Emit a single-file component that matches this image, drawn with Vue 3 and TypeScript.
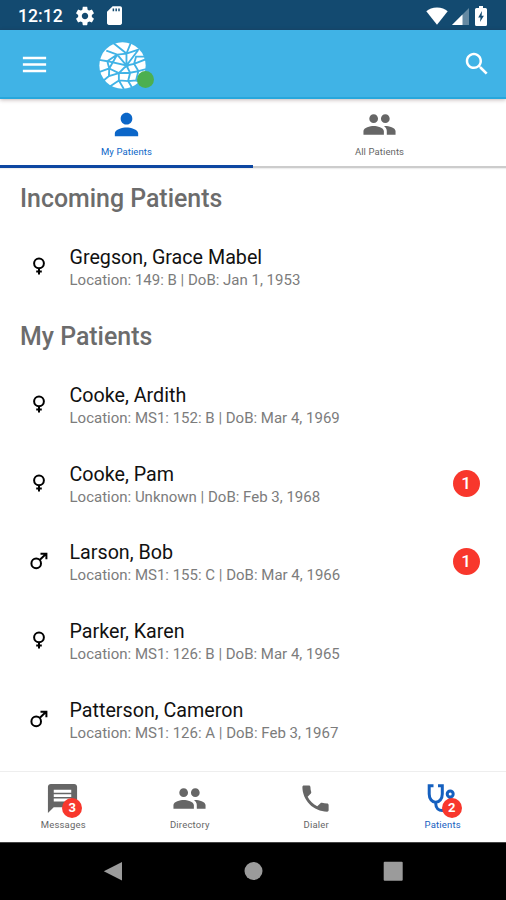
<script setup lang="ts">
type Gender = 'female' | 'male'

interface Patient {
  name: string
  location: string
  dob: string
  gender: Gender
  alerts?: number
}

interface Section {
  title: string
  patients: Patient[]
}

interface NavItem {
  label: string
  icon: string
  badge?: number
  active?: boolean
}

const PEOPLE =
  'M16 11c1.66 0 2.99-1.34 2.99-3S17.66 5 16 5s-3 1.34-3 3 1.34 3 3 3zm-8 0c1.66 0 2.99-1.34 2.99-3S9.66 5 8 5 5 6.34 5 8s1.34 3 3 3zm0 2c-2.33 0-7 1.17-7 3.5V19h14v-2.500c0-2.330-4.670-3.500-7-3.500zm8 0c-.29 0-.62.02-.97.05 1.160.840 1.970 1.970 1.970 3.450V19h6v-2.500c0-2.330-4.670-3.500-7-3.500z'

const sections: Section[] = [
  {
    title: 'Incoming Patients',
    patients: [{ name: 'Gregson, Grace Mabel', location: '149: B', dob: 'Jan 1, 1953', gender: 'female' }],
  },
  {
    title: 'My Patients',
    patients: [
      { name: 'Cooke, Ardith', location: 'MS1: 152: B', dob: 'Mar 4, 1969', gender: 'female' },
      { name: 'Cooke, Pam', location: 'Unknown', dob: 'Feb 3, 1968', gender: 'female', alerts: 1 },
      { name: 'Larson, Bob', location: 'MS1: 155: C', dob: 'Mar 4, 1966', gender: 'male', alerts: 1 },
      { name: 'Parker, Karen', location: 'MS1: 126: B', dob: 'Mar 4, 1965', gender: 'female' },
      { name: 'Patterson, Cameron', location: 'MS1: 126: A', dob: 'Feb 3, 1967', gender: 'male' },
    ],
  },
]

const navItems: NavItem[] = [
  {
    label: 'Messages',
    icon: 'M20 2H4c-1.100 0-1.990.900-1.990 2L2 22l4-4h14c1.100 0 2-.900 2-2V4c0-1.100-.900-2-2-2zm-2 12H6v-2h12v2zm0-3H6V9h12v2zm0-3H6V6h12v2z',
    badge: 3,
  },
  { label: 'Directory', icon: PEOPLE },
  {
    label: 'Dialer',
    icon: 'M6.620 10.790c1.440 2.830 3.760 5.140 6.590 6.590l2.200-2.200c.270-.270.670-.360 1.020-.240 1.120.370 2.330.570 3.570.570.550 0 1 .450 1 1V20c0 .550-.450 1-1 1-9.390 0-17-7.610-17-17 0-.550.450-1 1-1h3.500c.550 0 1 .450 1 1 0 1.250.200 2.450.570 3.570.110.350.030.740-.250 1.020l-2.200 2.200z',
  },
  { label: 'Patients', icon: '', badge: 2, active: true },
]
</script>

<template>
  <div class="screen">
    <header class="status">
      <span class="clock">12:12</span>
      <svg class="gear" viewBox="0 0 24 24"><path d="M19.430 12.980c.040-.320.070-.640.070-.980s-.030-.660-.070-.980l2.110-1.650c.190-.150.240-.420.120-.640l-2-3.460c-.120-.220-.390-.300-.610-.220l-2.490 1c-.520-.400-1.080-.730-1.690-.980l-.380-2.650C14.460 2.180 14.250 2 14 2h-4c-.250 0-.460.180-.490.420l-.380 2.650c-.610.250-1.170.590-1.690.980l-2.490-1c-.230-.090-.490 0-.610.220l-2 3.460c-.130.220-.070.490.120.640l2.110 1.650c-.040.320-.070.650-.070.980s.030.660.070.980l-2.110 1.650c-.190.150-.240.420-.120.640l2 3.460c.120.220.390.300.610.220l2.490-1c.520.400 1.080.730 1.690.980l.380 2.650c.030.240.240.420.490.420h4c.250 0 .460-.180.490-.420l.380-2.650c.610-.250 1.170-.590 1.690-.980l2.490 1c.230.090.490 0 .610-.220l2-3.460c.120-.220.070-.490-.120-.640l-2.110-1.650zM12 15.500c-1.930 0-3.500-1.570-3.500-3.500s1.570-3.500 3.500-3.500 3.500 1.570 3.500 3.500-1.570 3.500-3.500 3.500z" /></svg>
      <svg class="sd" viewBox="0 0 16 20"><path d="M14 0H6L0 6v12c0 1.100.900 2 2 2h12c1.100 0 2-.900 2-2V2c0-1.100-.900-2-2-2z" /><path class="notch" d="M6 2.500h1.600v3H6zM9 2.500h1.600v3H9zM12 2.500h1.600v3H12z" /></svg>
      <span class="spacer" />
      <svg class="wifi" viewBox="0 0 22 18"><path d="M11 17.800.300 4.300C2.800 1.900 6.600.500 11 .500s8.200 1.400 10.700 3.800z" /></svg>
      <svg class="cell" viewBox="0 0 17 17"><path class="dim" d="M17 0v17H0z" /><path d="M10.500 6.500V17H0z" /></svg>
      <svg class="battery" viewBox="0 0 12 20"><path d="M4 0h4v2h2.500A1.500 1.500 0 0 1 12 3.500v15a1.500 1.500 0 0 1-1.500 1.500h-9A1.500 1.500 0 0 1 0 18.500v-15A1.500 1.500 0 0 1 1.500 2H4z" /><path class="bolt" d="M7 5 3.200 11.500h2.300L5 16l3.900-6.300H6.600z" /></svg>
    </header>

    <div class="appbar">
      <svg class="menu" viewBox="0 0 24 24"><path d="M3 18h18v-2H3v2zm0-5h18v-2H3v2zm0-7v2h18V6H3z" /></svg>
      <div class="logo">
        <svg viewBox="0 0 142 142">
          <circle cx="71" cy="71" r="70" />
          <path d="M22 26 55 38 83 35 121 22M44 4 83 35 96 3M55 38 25 58 0 54M55 38 31 80M25 58 83 71 55 38M83 31V71L118 25M83 71 106 66 142 52M106 66 112 44 137 44M25 58 31 80 2 90M31 80 60 94 83 71M60 94 30 103 12 118M30 103 31 80M60 94 60 116 34 134M60 116 88 118 94 93 83 71M60 116 75 142M88 118 101 140M94 93 119 88 106 66M119 88 142 82M119 88 112 116 88 118M112 116 130 126M60 94 94 93" />
        </svg>
        <i class="presence" />
      </div>
      <span class="spacer" />
      <svg class="search" viewBox="0 0 24 24"><path d="M15.500 14h-.790l-.280-.270C15.410 12.590 16 11.110 16 9.500 16 5.910 13.090 3 9.500 3S3 5.910 3 9.500 5.910 16 9.500 16c1.610 0 3.090-.590 4.230-1.570l.270.280v.790l5 4.990L20.490 19l-4.990-5zm-6 0C7.010 14 5 11.990 5 9.500S7.010 5 9.500 5 14 7.010 14 9.500 11.990 14 9.500 14z" /></svg>
    </div>

    <nav class="tabs">
      <div class="tab active">
        <svg viewBox="0 0 24 24"><path d="M12 12c2.210 0 4-1.790 4-4s-1.790-4-4-4-4 1.790-4 4 1.790 4 4 4zm0 2c-2.670 0-8 1.340-8 4v2h16v-2c0-2.660-5.330-4-8-4z" /></svg>
        <span class="tab-label">My Patients</span>
      </div>
      <div class="tab">
        <svg viewBox="0 0 24 24"><path :d="PEOPLE" /></svg>
        <span class="tab-label">All Patients</span>
      </div>
    </nav>

    <main class="list">
      <section v-for="section in sections" :key="section.title">
        <h2>{{ section.title }}</h2>
        <article v-for="p in section.patients" :key="p.name" class="row">
          <svg v-if="p.gender === 'female'" class="gender" viewBox="0 0 20 20"><circle cx="10" cy="7.300" r="4.900" /><path d="M10 12.200V18.500M7.200 15.600h5.600" /></svg>
          <svg v-else class="gender" viewBox="0 0 20 20"><circle cx="7.200" cy="12.400" r="4.800" /><path d="M10.600 9 17.200 2.800M11.500 2.700h5.900V8.200" /></svg>
          <div class="info">
            <div class="name">{{ p.name }}</div>
            <div class="meta">Location: {{ p.location }} | DoB: {{ p.dob }}</div>
          </div>
          <span v-if="p.alerts" class="alerts">{{ p.alerts }}</span>
        </article>
      </section>
    </main>

    <nav class="bottom">
      <div v-for="item in navItems" :key="item.label" class="nav-item" :class="{ active: item.active }">
        <div class="nav-icon">
          <svg v-if="item.icon" viewBox="0 0 24 24"><path :d="item.icon" /></svg>
          <svg v-else class="stetho" viewBox="0 0 35 35">
            <path d="M8.500 4.700H4.200V13c0 5 3 8.300 6.500 8.300S17.300 18 17.300 13V4.700H13M10.800 21.500v1.500c0 4.500 3 6.500 6.500 6.500 5 0 8-3 8-8V17" />
            <circle cx="25.200" cy="13" r="3" />
          </svg>
          <b v-if="item.badge" class="count">{{ item.badge }}</b>
        </div>
        <span class="nav-label">{{ item.label }}</span>
      </div>
    </nav>

    <footer class="system">
      <div><svg viewBox="0 0 20 20"><path d="M19 1v18.500L.800 10.300z" /></svg></div>
      <div><svg viewBox="0 0 20 20"><circle cx="10.500" cy="10" r="9" /></svg></div>
      <div><svg viewBox="0 0 20 20"><rect x=".7" y=".8" width="19" height="19" rx="1" /></svg></div>
    </footer>
  </div>
</template>

<style>
body {
  margin: 0;
  background: #fff;
}
</style>

<style scoped>
.screen {
  width: 506px;
  height: 900px;
  display: flex;
  flex-direction: column;
  overflow: hidden;
  background: #fff;
  font-family: Roboto, "Liberation Sans", sans-serif;
}

svg {
  display: block;
  flex: none;
  fill: currentColor;
}

.spacer {
  flex: 1;
}

.status {
  height: 30px;
  flex: none;
  box-sizing: border-box;
  display: flex;
  align-items: center;
  padding: 1px 19px 0 18px;
  background: #134a70;
  color: #fff;
}

.clock {
  width: 56px;
  font-size: 17.6px;
  font-weight: 500;
  line-height: 30px;
}

.gear {
  width: 22px;
  height: 22px;
}

.sd {
  width: 15px;
  height: 19px;
  margin-left: 11px;
}

.notch,
.bolt {
  fill: #134a70;
}

.wifi {
  width: 22px;
  height: 18px;
  margin-right: 4px;
}

.cell {
  width: 17px;
  height: 17px;
  margin: 2px 6px 0 0;
}

.dim {
  opacity: 0.35;
}

.battery {
  width: 12px;
  height: 20px;
}

.appbar {
  height: 69px;
  flex: none;
  box-sizing: border-box;
  display: flex;
  align-items: center;
  padding: 0 14px 0 19px;
  background: #40b3e6;
  border-bottom: 2px solid #27a7dc;
  color: #fff;
  box-shadow: 0 1px 4px rgba(60, 20, 20, 0.3);
  z-index: 1;
}

.menu {
  width: 31px;
  height: 31px;
  margin-top: 1px;
}

.logo {
  position: relative;
  width: 47px;
  height: 47px;
  margin: 3px 0 0 49px;
}

.logo svg {
  width: 47px;
  height: 47px;
}

.logo path {
  fill: none;
  stroke: #40b3e6;
  stroke-width: 5.6;
}

.presence {
  position: absolute;
  left: 38px;
  top: 29px;
  width: 17px;
  height: 17px;
  border-radius: 50%;
  background: #4caf50;
}

.search {
  width: 30px;
  height: 30px;
  margin-top: 1px;
}

.tabs {
  height: 69px;
  flex: none;
  display: flex;
  box-shadow: 0 1px 1px #eee;
}

.tab {
  flex: 1;
  box-sizing: border-box;
  display: flex;
  flex-direction: column;
  align-items: center;
  padding-top: 8px;
  border-bottom: 2px solid #ccc;
  color: #666;
}

.tab.active {
  color: #0b66c8;
  border-bottom: 3px solid #0d47a1;
}

.tab svg {
  width: 35px;
  height: 35px;
  margin-right: 1px;
}

.tab-label {
  margin-top: 4px;
  font-size: 9.5px;
  line-height: 12px;
  letter-spacing: 0.1px;
}

.list {
  flex: 1;
  min-height: 0;
  padding-top: 1px;
}

h2 {
  height: 59.2px;
  margin: 0;
  padding-left: 20px;
  font-size: 24.9px;
  font-weight: 500;
  line-height: 59px;
  color: #6c6c6c;
}

.row {
  height: 78.7px;
  box-sizing: border-box;
  display: flex;
  align-items: center;
  padding: 0 26.5px 0 29px;
}

.gender {
  width: 20px;
  height: 20px;
  margin-bottom: 3px;
  fill: none;
  stroke: #000;
  stroke-width: 2;
}

.info {
  flex: 1;
  padding: 2px 0 0 20.5px;
}

.name {
  font-size: 19.7px;
  line-height: 24px;
  color: #111;
}

.meta {
  font-size: 15px;
  line-height: 21px;
  color: #7c7c7c;
}

.alerts {
  width: 27px;
  height: 27px;
  margin-bottom: 2px;
  border-radius: 50%;
  background: #f8372c;
  color: #fff;
  font-size: 17px;
  font-weight: 500;
  line-height: 27px;
  text-align: center;
}

.bottom {
  height: 71px;
  flex: none;
  box-sizing: border-box;
  display: flex;
  border-top: 1px solid #eee;
}

.nav-item {
  flex: 1;
  display: flex;
  flex-direction: column;
  align-items: center;
  padding-top: 9px;
  color: #666;
}

.nav-item.active {
  color: #1560bf;
}

.nav-icon {
  position: relative;
  margin-right: 1px;
}

.nav-icon svg {
  width: 35px;
  height: 35px;
}

.nav-icon .stetho {
  fill: none;
  stroke: currentColor;
  stroke-width: 3;
}

.count {
  position: absolute;
  left: 17px;
  top: 17px;
  width: 20px;
  height: 20px;
  border-radius: 50%;
  background: #f8372c;
  color: #fff;
  font-size: 13px;
  line-height: 20px;
  text-align: center;
}

.nav-label {
  margin-top: 3px;
  font-size: 9.5px;
  line-height: 12px;
  letter-spacing: 0.2px;
}

.system {
  height: 58px;
  flex: none;
  box-sizing: border-box;
  display: flex;
  justify-content: center;
  gap: 120px;
  background: #000;
  color: #9b9b9b;
  border-top: 1px solid #444;
  padding-top: 18px;
}

.system svg {
  width: 20px;
  height: 20px;
}
</style>
